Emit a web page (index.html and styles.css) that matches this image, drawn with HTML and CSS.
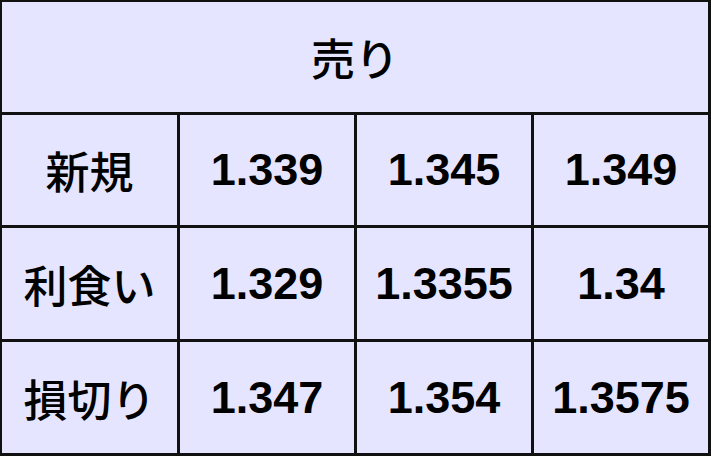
FILE: index.html
```html
<!DOCTYPE html>
<html lang="ja">
<head>
<meta charset="utf-8">
<link rel="stylesheet" href="styles.css">
</head>
<body>
<div class="table">
  <div class="cell head">売り</div>
  <div class="cell label">新規</div>
  <div class="cell num">1.339</div>
  <div class="cell num">1.345</div>
  <div class="cell num">1.349</div>
  <div class="cell label">利食い</div>
  <div class="cell num">1.329</div>
  <div class="cell num">1.3355</div>
  <div class="cell num">1.34</div>
  <div class="cell label">損切り</div>
  <div class="cell num">1.347</div>
  <div class="cell num">1.354</div>
  <div class="cell num">1.3575</div>
</div>
</body>
</html>
```
FILE: styles.css
```css
html, body {
  margin: 0;
  padding: 0;
  background: #e5e5ff;
}
.table {
  width: 711px;
  height: 456px;
  box-sizing: border-box;
  background: #111;
  padding: 2px 3px 3px 2px;
  display: grid;
  grid-template-columns: 175px 174px 174px 174px;
  grid-template-rows: 110px 110px 111px 111px;
  gap: 3px;
}
.cell {
  background: #e5e5ff;
  display: flex;
  align-items: center;
  justify-content: center;
  color: #000;
}
.head {
  grid-column: 1 / 5;
  font-family: "Noto Sans CJK JP", sans-serif;
  font-size: 44px;
  font-weight: 500;
}
.label {
  font-family: "Noto Sans CJK JP", sans-serif;
  font-size: 44px;
  font-weight: 500;
}
.num {
  font-family: "Liberation Sans", Arial, sans-serif;
  font-size: 45px;
  font-weight: bold;
}
```
